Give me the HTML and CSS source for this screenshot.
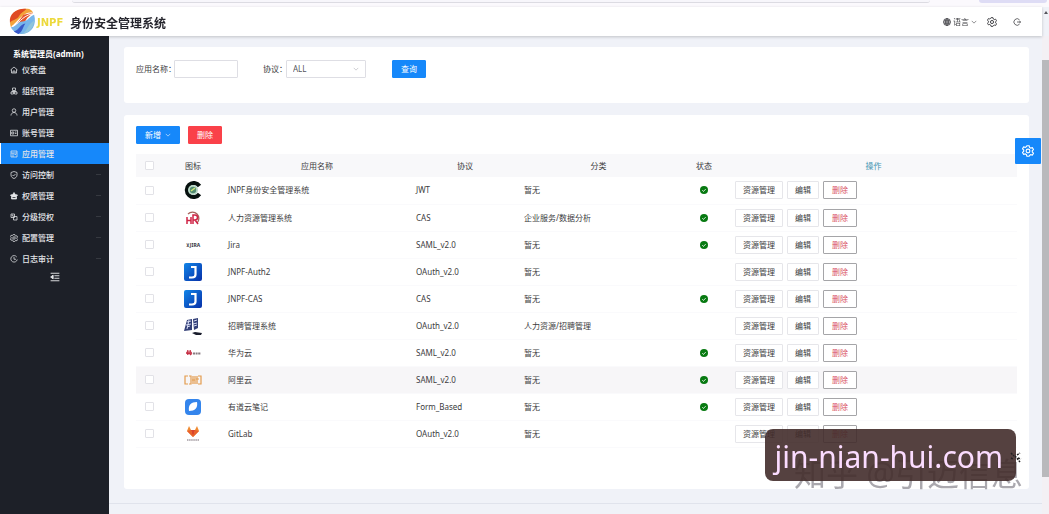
FILE: index.html
```html
<!DOCTYPE html>
<html lang="zh-CN">
<head>
    <meta charset="UTF-8">
    <meta name="viewport" content="width=device-width, initial-scale=1.0">
    <title>JNPF 身份安全管理系统</title>
    <link rel="stylesheet" href="styles.css">
</head>
<body>

    <!-- 图标定义 -->
    <svg class="icon-defs" aria-hidden="true">
        <symbol id="i-home" viewBox="0 0 16 16"><path d="M1 8l7-6 7 6M3 7v7h10V7M6 14v-4h4v4"/></symbol>
        <symbol id="i-org" viewBox="0 0 16 16"><path d="M5 2h6v5H5zM2 10h5v4H2zM9 10h5v4H9zM8 7v3M3 9h10"/></symbol>
        <symbol id="i-user" viewBox="0 0 16 16"><circle cx="8" cy="5" r="3.5"/><path d="M2 15c0-4 3-6 6-6s6 2 6 6"/></symbol>
        <symbol id="i-card" viewBox="0 0 16 16"><path d="M1 2.500h14v11H1zM3.500 6h4v4h-4zM10 6h3M10 9h3"/></symbol>
        <symbol id="i-app" viewBox="0 0 16 16"><path d="M2 2h12v12H2zM2 6h12M6 6v8M9 9h3"/></symbol>
        <symbol id="i-shield" viewBox="0 0 16 16"><path d="M8 1l6 2v5c0 4-3 6-6 7-3-1-6-3-6-7V3zM5 8l2 2 4-4"/></symbol>
        <symbol id="i-role" viewBox="0 0 16 16"><path d="M8 1l2.500 4L15 6l-2 3v5H3V9L1 6l4.500-1z" fill="currentColor"/><path d="M5 11h6" stroke="#1d2028"/></symbol>
        <symbol id="i-level" viewBox="0 0 16 16"><path d="M2 2h7v7H2zM7 7h7v7H7z"/><circle cx="5" cy="5" r="1"/></symbol>
        <symbol id="i-gear" viewBox="0 0 16 16"><path d="M6.500 1h3l.6 2.200 1.500.9 2.200-.6 1.500 2.600-1.600 1.600v1.600l1.600 1.600-1.500 2.600-2.200-.6-1.500.9L9.500 15h-3l-.6-2.200-1.500-.9-2.200.6-1.500-2.600 1.600-1.600V6.700L.7 5.100l1.500-2.600 2.200.6 1.500-.9z"/><circle cx="8" cy="8" r="2.500"/></symbol>
        <symbol id="i-clock" viewBox="0 0 16 16"><path d="M13.500 4A6.500 6.500 0 1 0 14.500 9M8 4v4.500h4"/></symbol>
        <symbol id="i-fold" viewBox="0 0 16 16"><path d="M1 2h14M7 6h8M7 10h8M1 14h14"/><path d="M5 5v6L1 8z" fill="currentColor"/></symbol>
        <symbol id="i-down" viewBox="0 0 16 16"><path d="M2 5l6 6 6-6"/></symbol>
        <symbol id="i-globe" viewBox="0 0 16 16"><circle cx="8" cy="8" r="7"/><ellipse cx="8" cy="8" rx="3" ry="7"/><path d="M1 8h14M2 4.500h12M2 11.500h12M8 1v14"/></symbol>
        <symbol id="i-logout" viewBox="0 0 16 16"><path d="M13 3.500A6.500 6.500 0 1 0 13 12.500M8 8h7M13 5.500L15 8l-2 2.500"/></symbol>
        <symbol id="i-ok" viewBox="0 0 16 16"><circle cx="8" cy="8" r="8" fill="#087a12" stroke="none"/><path d="M4.500 8l2.500 3 4.500-5" stroke="#fff"/></symbol>
        <symbol id="i-auth" viewBox="0 0 18 18">
            <linearGradient id="blue" x1="0" y1="0" x2="1" y2="1"><stop offset="0" stop-color="#1185e8"/><stop offset="1" stop-color="#0730a8"/></linearGradient>
            <rect width="18" height="18" rx="2" fill="url(#blue)" stroke="none"/>
            <path d="M7 4h4.500v7.500q0 3-3.500 3H5" stroke="#fff" stroke-width="2.200"/>
        </symbol>
    </svg>

    <!-- 浏览器标签条 -->
    <div class="tab-strip"><span class="tab-line"></span><span class="tab-end"></span></div>

    <!-- 顶部栏 -->
    <header class="header">
        <svg class="logo" viewBox="0 0 30 30" role="img" aria-label="JNPF">
            <path d="M3 21C-1 9 8 0 22 2c2 1 3 2 4 4-8-2-12 4-23 15z" fill="#f3a33a"/>
            <path d="M2 16C1 7 9 1 19 2c-3 3-6 4-8 8-2 3-6 3-9 6z" fill="#df4a24"/>
            <path d="M16 8l10-2-6 5-3 5-9 3z" fill="#e5542a"/>
            <path d="M3 21c5 0 6-6 12-6 5 0 7-5 12-7 3 10-2 19-12 20-6 0-10-3-12-7z" fill="#77b5ea"/>
            <path d="M6 25c6-1 6-7 12-8-3 4-2 7-7 11-2-1-4-2-5-3z" fill="#3858c8"/>
            <path d="M14 28c6-2 5-9 13-14 0 7-6 14-13 14z" fill="#8fc4dc"/>
            <path d="M4 20c8-2 9-10 21-13" fill="none" stroke="#fff" stroke-width="1"/>
        </svg>
        <span class="brand">JNPF</span>
        <h1 class="title">身份安全管理系统</h1>
        <div class="tools">
            <button class="tool" type="button"><svg class="icon"><use href="#i-globe"/></svg>语言<svg class="icon icon-small"><use href="#i-down"/></svg></button>
            <button class="tool" type="button" aria-label="设置"><svg class="icon icon-large"><use href="#i-gear"/></svg></button>
            <button class="tool" type="button" aria-label="退出"><svg class="icon"><use href="#i-logout"/></svg></button>
        </div>
    </header>

    <div class="layout">
        <!-- 侧边菜单 -->
        <nav class="sidebar">
            <p class="account">系统管理员(admin)</p>
            <a class="menu-item" href="#"><svg class="icon"><use href="#i-home"/></svg>仪表盘</a>
            <a class="menu-item" href="#"><svg class="icon"><use href="#i-org"/></svg>组织管理</a>
            <a class="menu-item" href="#"><svg class="icon"><use href="#i-user"/></svg>用户管理</a>
            <a class="menu-item" href="#"><svg class="icon"><use href="#i-card"/></svg>账号管理</a>
            <a class="menu-item active" href="#"><svg class="icon"><use href="#i-app"/></svg>应用管理</a>
            <a class="menu-item more" href="#"><svg class="icon"><use href="#i-shield"/></svg>访问控制</a>
            <a class="menu-item more" href="#"><svg class="icon"><use href="#i-role"/></svg>权限管理</a>
            <a class="menu-item more" href="#"><svg class="icon"><use href="#i-level"/></svg>分级授权</a>
            <a class="menu-item more" href="#"><svg class="icon"><use href="#i-gear"/></svg>配置管理</a>
            <a class="menu-item more" href="#"><svg class="icon"><use href="#i-clock"/></svg>日志审计</a>
            <button class="fold" type="button" aria-label="收起菜单"><svg class="icon icon-large"><use href="#i-fold"/></svg></button>
        </nav>

        <main class="main">
            <!-- 查询条件 -->
            <form class="card search">
                <label for="appName">应用名称：</label>
                <input class="text-input" type="text" id="appName">
                <label class="protocol-label" for="protocol">协议：</label>
                <span class="select-box">
                    <select id="protocol">
                        <option>ALL</option>
                        <option>JWT</option>
                        <option>CAS</option>
                    </select>
                    <svg class="icon icon-small"><use href="#i-down"/></svg>
                </span>
                <button class="btn primary query" type="button">查询</button>
            </form>

            <!-- 应用列表 -->
            <section class="card list">
                <div class="toolbar">
                    <button class="btn primary add" type="button">新增<svg class="icon icon-small"><use href="#i-down"/></svg></button>
                    <button class="btn danger" type="button">删除</button>
                </div>
                <table class="apps">
                    <colgroup>
                        <col class="col-check"><col class="col-icon"><col class="col-name"><col class="col-protocol"><col class="col-type"><col class="col-status"><col>
                    </colgroup>
                    <thead>
                        <tr>
                            <th><input type="checkbox" aria-label="全选"></th>
                            <th>图标</th>
                            <th>应用名称</th>
                            <th>协议</th>
                            <th>分类</th>
                            <th>状态</th>
                            <th class="action-head">操作</th>
                        </tr>
                    </thead>
                    <tbody>
                        <tr>
                            <td class="center"><input type="checkbox" aria-label="JNPF身份安全管理系统"></td>
                            <td class="center"><svg class="app-icon" viewBox="0 0 18 18"><path d="M15.500 5A7 7 0 1 0 15.500 13" fill="none" stroke="#07110f" stroke-width="4"/><circle cx="9" cy="9" r="5" fill="#b9d8c7"/><circle cx="9" cy="9" r="3.200" fill="#518b70"/><path d="M7 10l4-3" stroke="#cde879" stroke-width="1.500"/></svg></td>
                            <td>JNPF身份安全管理系统</td><td>JWT</td><td>暂无</td>
                            <td class="center"><svg class="icon"><use href="#i-ok"/></svg></td>
                            <td><div class="actions"><button class="btn" type="button">资源管理</button><button class="btn" type="button">编辑</button><button class="btn remove" type="button">删除</button></div></td>
                        </tr>
                        <tr>
                            <td class="center"><input type="checkbox" aria-label="人力资源管理系统"></td>
                            <td class="center"><svg class="app-icon" viewBox="0 0 18 18" fill="none"><path d="M4 5a6 6 0 1 1 9 9" stroke="#a8635c" stroke-width="1.300"/><path d="M3 8v7M7 8v7M3 11.500h4M9 15V6h2q2.500 0 2.500 2.500T11 11H9M11 11l3 4" stroke="#cf2446" stroke-width="1.500"/></svg></td>
                            <td>人力资源管理系统</td><td>CAS</td><td>企业服务/数据分析</td>
                            <td class="center"><svg class="icon"><use href="#i-ok"/></svg></td>
                            <td><div class="actions"><button class="btn" type="button">资源管理</button><button class="btn" type="button">编辑</button><button class="btn remove" type="button">删除</button></div></td>
                        </tr>
                        <tr>
                            <td class="center"><input type="checkbox" aria-label="Jira"></td>
                            <td class="center"><span class="jira-logo">⊻JIRA</span></td>
                            <td>Jira</td><td>SAML_v2.0</td><td>暂无</td>
                            <td class="center"><svg class="icon"><use href="#i-ok"/></svg></td>
                            <td><div class="actions"><button class="btn" type="button">资源管理</button><button class="btn" type="button">编辑</button><button class="btn remove" type="button">删除</button></div></td>
                        </tr>
                        <tr>
                            <td class="center"><input type="checkbox" aria-label="JNPF-Auth2"></td>
                            <td class="center"><svg class="app-icon"><use href="#i-auth"/></svg></td>
                            <td>JNPF-Auth2</td><td>OAuth_v2.0</td><td>暂无</td>
                            <td></td>
                            <td><div class="actions"><button class="btn" type="button">资源管理</button><button class="btn" type="button">编辑</button><button class="btn remove" type="button">删除</button></div></td>
                        </tr>
                        <tr>
                            <td class="center"><input type="checkbox" aria-label="JNPF-CAS"></td>
                            <td class="center"><svg class="app-icon"><use href="#i-auth"/></svg></td>
                            <td>JNPF-CAS</td><td>CAS</td><td>暂无</td>
                            <td class="center"><svg class="icon"><use href="#i-ok"/></svg></td>
                            <td><div class="actions"><button class="btn" type="button">资源管理</button><button class="btn" type="button">编辑</button><button class="btn remove" type="button">删除</button></div></td>
                        </tr>
                        <tr>
                            <td class="center"><input type="checkbox" aria-label="招聘管理系统"></td>
                            <td class="center"><svg class="app-icon" viewBox="0 0 18 18"><path d="M3 3l5-1v11l-8 1zM9 2l5-1v10l-4 2z" fill="#344078"/><path d="M3 5l4-1M2 8l5-1M3 10l3-1M5 3L3 12M10 4l3-1M9 7l4-1M10 9l3-1" stroke="#d6dcf4"/><path d="M8 16l3-1 7 1-1 2h-5z" fill="#191c2c"/></svg></td>
                            <td>招聘管理系统</td><td>OAuth_v2.0</td><td>人力资源/招聘管理</td>
                            <td></td>
                            <td><div class="actions"><button class="btn" type="button">资源管理</button><button class="btn" type="button">编辑</button><button class="btn remove" type="button">删除</button></div></td>
                        </tr>
                        <tr>
                            <td class="center"><input type="checkbox" aria-label="华为云"></td>
                            <td class="center"><svg class="app-icon" viewBox="0 0 18 18"><path d="M4 11L2 9l1-1 1 2zM4 10L3 7l1-1 1 4zM5 10l1-4 1 1-1 3zM6 11l1-3 1 1-1 2z" fill="#c3263c" stroke="#c3263c" stroke-width=".5"/><path d="M9 9.500h8" stroke="#887b80" stroke-width="2" stroke-dasharray="2 .6"/></svg></td>
                            <td>华为云</td><td>SAML_v2.0</td><td>暂无</td>
                            <td class="center"><svg class="icon"><use href="#i-ok"/></svg></td>
                            <td><div class="actions"><button class="btn" type="button">资源管理</button><button class="btn" type="button">编辑</button><button class="btn remove" type="button">删除</button></div></td>
                        </tr>
                        <tr class="hover">
                            <td class="center"><input type="checkbox" aria-label="阿里云"></td>
                            <td class="center"><svg class="app-icon" viewBox="0 0 18 18" fill="none" stroke="#e39b4d" stroke-width="1.200"><path d="M4 5H1v8h3M5 5h2v8H5M9 5v8M8 9h3M11 5v8M13 5v8M12 8h3M14 5h3v8h-3"/></svg></td>
                            <td>阿里云</td><td>SAML_v2.0</td><td>暂无</td>
                            <td class="center"><svg class="icon"><use href="#i-ok"/></svg></td>
                            <td><div class="actions"><button class="btn" type="button">资源管理</button><button class="btn" type="button">编辑</button><button class="btn remove" type="button">删除</button></div></td>
                        </tr>
                        <tr>
                            <td class="center"><input type="checkbox" aria-label="有道云笔记"></td>
                            <td class="center"><svg class="app-icon" viewBox="0 0 18 18"><rect x="1" y="1" width="16" height="16" rx="4" fill="#3485ec"/><path d="M5 13c-1-6 2-9 8-9 1 6-2 9-8 9z" fill="#fff"/></svg></td>
                            <td>有道云笔记</td><td>Form_Based</td><td>暂无</td>
                            <td class="center"><svg class="icon"><use href="#i-ok"/></svg></td>
                            <td><div class="actions"><button class="btn" type="button">资源管理</button><button class="btn" type="button">编辑</button><button class="btn remove" type="button">删除</button></div></td>
                        </tr>
                        <tr>
                            <td class="center"><input type="checkbox" aria-label="GitLab"></td>
                            <td class="center"><svg class="app-icon" viewBox="0 0 18 18"><path d="M3 6l2-5 2 4h4l2-4 2 5-6 6z" fill="#ef8a32"/><path d="M7 5h4l-2 7z" fill="#d9442e"/><path d="M3 6l6 6-2-7zM15 6l-6 6 2-7z" fill="#e9602d"/><path d="M3 15h12" stroke="#b9b3b8" stroke-width="2" stroke-dasharray="1.500 .6"/></svg></td>
                            <td>GitLab</td><td>OAuth_v2.0</td><td>暂无</td>
                            <td></td>
                            <td><div class="actions"><button class="btn" type="button">资源管理</button><button class="btn" type="button">编辑</button><button class="btn remove" type="button">删除</button></div></td>
                        </tr>
                    </tbody>
                </table>
            </section>
            <footer class="footer"></footer>
        </main>
        <div class="scrollbar"><span class="thumb"></span></div>
    </div>

    <span class="scroll-up"></span>
    <button class="float-setting" type="button" aria-label="页面设置"><svg class="icon"><use href="#i-gear"/></svg></button>

    <!-- 水印 -->
    <div class="watermark">知乎 @引迈信息</div>
    <div class="site-tag">jin-nian-hui.com</div>
    <svg class="wand" viewBox="0 0 12 12"><path d="M1 1l3 3M5 4l5 6M7 3l3-2M8 6l3 1M1 6l2 1" /></svg>

</body>
</html>
```
FILE: styles.css
```css
* {
    box-sizing: border-box;
}

body {
    display: flex;
    flex-direction: column;
    min-height: 100vh;
    margin: 0;
    background-color: #f0f2f8;
    color: #3c3c40;
    font-family: "Noto Sans", "Noto Sans CJK SC", sans-serif;
    font-size: 8px;
    line-height: 12px;
}

button,
input,
select {
    font: inherit;
    color: inherit;
}

button {
    cursor: pointer;
}

.icon-defs {
    position: absolute;
    width: 0;
    height: 0;
}

.icon {
    flex: none;
    width: 8px;
    height: 8px;
    fill: none;
    stroke: currentColor;
    stroke-width: 1.5;
}

.icon-small {
    width: 6px;
    height: 6px;
}

.icon-large {
    width: 10px;
    height: 10px;
}

/* 浏览器标签条 */
.tab-strip {
    display: flex;
    justify-content: space-between;
    height: 7px;
    padding: 0 2px 0 72px;
    background-color: #fbf9fd;
}

.tab-line {
    width: 88%;
    height: 3px;
    background-color: #f7f6fb;
    border-bottom: 1px solid #dcdbe2;
    border-radius: 0 0 4px 4px;
}

.tab-end {
    width: 7%;
    height: 3px;
    background-color: #dedcf5;
    border-radius: 0 0 4px 4px;
}

/* 顶部栏 */
.header {
    z-index: 1;
    display: flex;
    align-items: center;
    height: 29px;
    margin-right: 7px;
    padding: 0 21px 0 8px;
    background-color: #fff;
    box-shadow: 0 1px 3px rgba(0, 0, 0, 0.2);
}

.logo {
    width: 29px;
    height: 29px;
}

.brand {
    width: 33px;
    padding-top: 2px;
    color: #ecd93c;
    font-family: "DejaVu Sans", sans-serif;
    font-size: 10px;
    font-weight: bold;
}

.title {
    margin: 4px 0 0;
    color: #25252d;
    font-size: 12px;
    font-weight: bold;
    line-height: 16px;
}

.tools {
    display: flex;
    align-items: center;
    gap: 10px;
    margin-left: auto;
}

.tool {
    display: flex;
    align-items: center;
    gap: 2px;
    padding: 0;
    background: none;
    border: none;
}

.tool + .tool + .tool {
    margin-left: 6px;
}

.layout {
    display: flex;
    flex: 1;
}

/* 侧边菜单 */
.sidebar {
    display: flex;
    flex-direction: column;
    width: 109px;
    padding-top: 12px;
    background-color: #1d2028;
    color: #e4e5e8;
}

.account {
    height: 11px;
    margin: 0;
    padding-left: 13px;
    color: #fff;
    font-weight: bold;
}

.menu-item {
    display: flex;
    align-items: center;
    gap: 4px;
    height: 21px;
    padding: 0 8px 0 10px;
    color: inherit;
    font-weight: 500;
    text-decoration: none;
}

.menu-item.active {
    background-color: #1688fa;
    border-left: 1px solid #fff;
    padding-left: 9px;
}

.menu-item.more::after {
    content: '';
    width: 5px;
    height: 1px;
    margin-left: auto;
    background-color: #363940;
}

.fold {
    align-self: center;
    display: flex;
    margin-top: 3px;
    padding: 0;
    background: none;
    border: none;
}

/* 主内容 */
.main {
    display: flex;
    flex: 1;
    flex-direction: column;
    gap: 12px;
    min-width: 0;
    padding: 11px 13px 0 15px;
}

.card {
    padding: 11px 12px;
    background-color: #fff;
    border-radius: 3px;
}

.search {
    display: flex;
    align-items: flex-start;
    min-height: 56px;
    padding-top: 13px;
}

.search label {
    width: 38px;
    line-height: 18px;
    white-space: nowrap;
}

.text-input {
    width: 64px;
    height: 18px;
    margin-right: 25px;
    border: 1px solid #dedee4;
    border-radius: 1px;
}

.search .protocol-label {
    width: 23px;
}

.select-box {
    display: flex;
    position: relative;
    align-items: center;
    color: #55555c;
}

.select-box select {
    width: 80px;
    height: 18px;
    padding: 0 6px;
    appearance: none;
    background-color: #fff;
    border: 1px solid #dedee4;
    border-radius: 1px;
}

.select-box .icon {
    position: absolute;
    right: 7px;
    color: #aaaab2;
    pointer-events: none;
}

.btn {
    height: 18px;
    padding: 0 8px;
    background-color: #fff;
    border: 1px solid #e6e6ea;
    border-radius: 1px;
    line-height: 16px;
    white-space: nowrap;
}

.btn.primary {
    background-color: #1688fa;
    border-color: #1688fa;
    color: #fff;
}

.btn.danger {
    background-color: #fa4149;
    border-color: #fa4149;
    color: #fff;
}

.query {
    margin-left: 26px;
}

/* 应用列表 */
.list {
    flex: 1;
}

.toolbar {
    display: flex;
    gap: 8px;
    margin-bottom: 10px;
}

.add {
    display: flex;
    align-items: center;
    gap: 4px;
}

.apps {
    width: 100%;
    border-collapse: collapse;
    table-layout: fixed;
}

.col-check {
    width: 27px;
}

.col-icon {
    width: 60px;
}

.col-name {
    width: 188px;
}

.col-protocol {
    width: 108px;
}

.col-type {
    width: 159px;
}

.col-status {
    width: 52px;
}

.apps th {
    height: 23px;
    padding: 0 5px;
    background-color: #f8f8fa;
    font-weight: normal;
}

.apps .action-head {
    color: #3e93b0;
}

.apps td {
    height: 27px;
    padding: 0 5px;
    border-bottom: 1px solid #fafafc;
}

.apps .hover td {
    background-color: #f7f6f8;
}

.apps .center {
    text-align: center;
}

.apps svg {
    display: block;
    margin: 0 auto;
}

.apps input {
    display: block;
    width: 9px;
    height: 9px;
    margin: 0 auto;
    appearance: none;
    background-color: #fff;
    border: 1px solid #e2e2e7;
    border-radius: 1px;
}

.app-icon {
    width: 18px;
    height: 18px;
    fill: none;
}

.jira-logo {
    color: #33333c;
    font-size: 5px;
    font-weight: bold;
}

.actions {
    display: flex;
    gap: 4px;
}

.actions .btn {
    padding: 0 7px;
}

.actions .remove {
    padding: 0 8px;
    border-color: #a5a5a8;
    color: #d95363;
}

/* 页脚 */
.footer {
    height: 11px;
    margin: 2px -13px 0 -15px;
    border-top: 1px solid #e0e3ec;
}

/* 滚动条 */
.scrollbar {
    width: 7px;
    padding-top: 24px;
    background-color: #f3f0f4;
}

.thumb {
    display: block;
    height: 417px;
    background-color: #b9b9bc;
}

.scroll-up {
    position: fixed;
    top: 11px;
    right: 1px;
    border: 2px solid transparent;
    border-top: none;
    border-bottom: 3px solid #55555c;
}

/* 悬浮设置按钮 */
.float-setting {
    position: fixed;
    top: 138px;
    right: 8px;
    display: flex;
    align-items: center;
    justify-content: center;
    width: 26px;
    height: 26px;
    background-color: #1688fa;
    border: none;
    border-radius: 1px;
    color: #fff;
}

.float-setting .icon {
    width: 12px;
    height: 12px;
}

/* 水印 */
.watermark {
    position: fixed;
    right: 26px;
    bottom: 22px;
    color: #aaa8ae;
    font-size: 32px;
    line-height: 36px;
    white-space: nowrap;
}

.site-tag {
    position: fixed;
    right: 33px;
    bottom: 33px;
    height: 52px;
    padding: 0 13px 0 10px;
    background-color: rgba(67, 44, 43, 0.9);
    border-radius: 8px;
    color: #fbdcff;
    font-size: 30px;
    line-height: 56px;
}

.wand {
    position: fixed;
    right: 27px;
    bottom: 50px;
    width: 12px;
    height: 12px;
    fill: none;
    stroke: #222;
    stroke-width: 1.5;
    stroke-dasharray: 2 1;
}
```
